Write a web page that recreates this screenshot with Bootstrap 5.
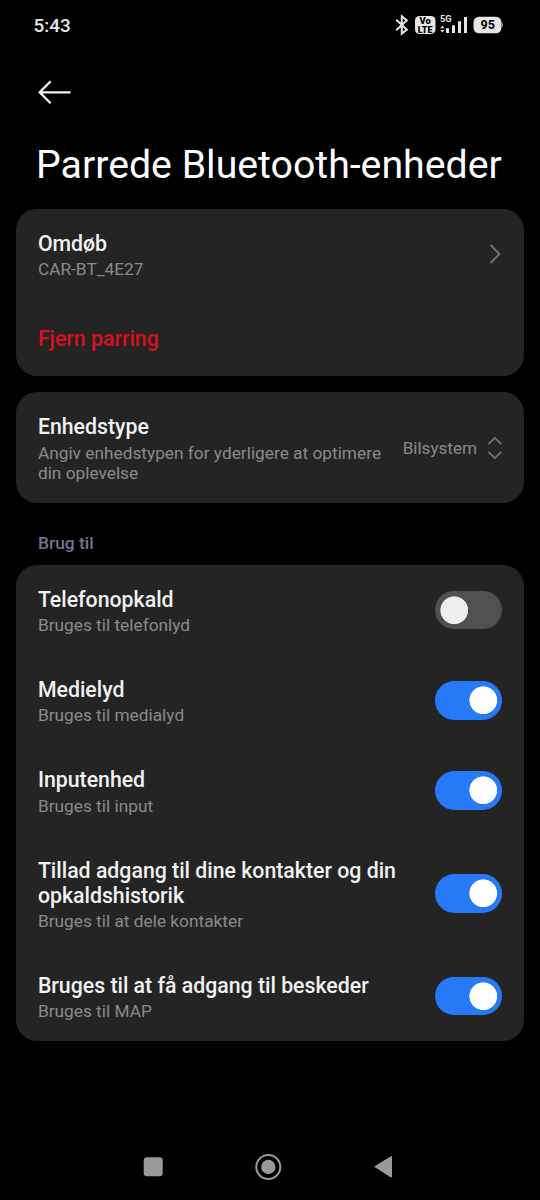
<!DOCTYPE html>
<html lang="da" data-bs-theme="dark">
<head>
<meta charset="utf-8">
<meta name="viewport" content="width=device-width, initial-scale=1">
<title>Parrede Bluetooth-enheder</title>
<link href="https://cdn.jsdelivr.net/npm/bootstrap@5.3.0/dist/css/bootstrap.min.css" rel="stylesheet">
<style>
body{background:#000;color:#f2f2f2;font-family:Roboto,"Liberation Sans",sans-serif;height:1200px;overflow:hidden}
svg{display:block;flex:none}
.statusbar{height:50px;padding:0 36px 0 33.5px;color:#e6e6e6}
.clock{font-size:18.9px;font-weight:500;line-height:50px;padding-top:1px}
.back{height:84px;padding:30px 0 0 38px}
.page-title{font-size:39.25px;font-weight:400;line-height:48px;margin:7px 0 20px 36px;white-space:nowrap}
.panel{background:#242424;border-radius:21px;margin:0 16.5px 16.5px 16.4px;padding:0 21.5px}
.setting{min-height:90.25px;padding:20.8px 0}
.setting>:first-child{margin:1.2px 0 -1.2px}
.setting-name{font-size:21.29px;font-weight:500;line-height:25.2px}
.setting-note{font-size:17.3px;line-height:20.4px;margin-top:3px;color:#8a8a8a}
.unpair{height:76.6px;line-height:79px;font-size:21.27px;font-weight:500;color:#d9101f}
.section-name{font-size:17.4px;font-weight:500;line-height:20px;color:#74748c;margin:30px 0 12px 38px}
.device-type{font-size:17.1px;color:#8a8a8a;margin:2.4px 10px 0 0}
.form-switch .form-check-input{width:67.5px;height:38.5px;border:0;border-radius:20px;background-color:#505050;background-size:38.5px 38.5px;background-image:radial-gradient(circle at center,#eee 13.5px,transparent 14.2px);background-position:left 0 center;margin:0;box-shadow:none;opacity:1}
.form-switch .form-check-input:checked{background-color:#277af7;background-image:radial-gradient(circle at center,#fff 13.5px,transparent 14.2px);background-position:right 0 center}
.navkeys{position:fixed;left:0;right:0;bottom:18px;height:30px}
</style>
</head>
<body class="d-flex flex-column">
<header>
<div class="statusbar d-flex justify-content-between align-items-center">
<span class="clock">5:43</span>
<svg width="111" height="26" viewBox="393 12 111 26" fill="#e6e6e6" font-family="Roboto,sans-serif">
<path d="M396.2 19.7 406.8 29.6 401.8 33.7V16.3L406.8 20.4 396.2 30.3" fill="none" stroke="#e6e6e6" stroke-width="2"/>
<rect x="415" y="16" width="20.5" height="18" rx="4.5"/>
<text x="425.2" y="24.4" text-anchor="middle" font-size="9.3" font-weight="900" fill="#000">Vo</text>
<text x="425.2" y="32.6" text-anchor="middle" font-size="9" font-weight="900" fill="#000">LTE</text>
<text x="440" y="21.8" font-size="9.3" font-weight="700">5G</text>
<path d="M440.3 28.2 442.4 25.7 444.5 28.2ZM440.3 30 442.4 32.6 444.5 30ZM446 28.3h3v4.7h-3ZM452 25.3h3V33h-3ZM458 21.3h3V33h-3ZM464 17h3v16h-3Z"/>
<rect x="473.5" y="16.7" width="28" height="16.6" rx="5.5"/>
<path d="M502 22q1.7 3 0 6Z"/>
<text x="487.7" y="29.4" text-anchor="middle" font-size="12.5" font-weight="700" fill="#000">95</text>
</svg>
</div>
<div class="back">
<svg width="34" height="26" viewBox="0 0 34 26" fill="none" stroke="#f2f2f2" stroke-width="2.3"><path d="M32.6 12.3H2M12.6 1.4 1.7 12.3 12.6 23.2"/></svg>
</div>
<h1 class="page-title">Parrede Bluetooth-enheder</h1>
</header>
<main>
<section class="panel">
<div class="setting d-flex align-items-center justify-content-between">
<div><div class="setting-name">Omdøb</div><div class="setting-note">CAR-BT_4E27</div></div>
<svg width="14" height="22" viewBox="0 0 14 22" fill="none" stroke="#747474" stroke-width="1.8"><path d="M2.5 2 11.5 11 2.5 20"/></svg>
</div>
<div class="unpair">Fjern parring</div>
</section>
<section class="panel mb-0">
<div class="setting d-flex align-items-center">
<div class="flex-grow-1"><div class="setting-name">Enhedstype</div><div class="setting-note">Angiv enhedstypen for yderligere at optimere<br>din oplevelse</div></div>
<span class="device-type">Bilsystem</span>
<svg width="15" height="24" viewBox="0 0 15 24" fill="none" stroke="#747474" stroke-width="1.8"><path d="M1.3 8.2 7.8 1.9 14.3 8.2M1.3 15.8 7.8 22.1 14.3 15.8"/></svg>
</div>
</section>
<h2 class="section-name">Brug til</h2>
<section class="panel">
<div class="setting d-flex align-items-center justify-content-between">
<div><div class="setting-name">Telefonopkald</div><div class="setting-note">Bruges til telefonlyd</div></div>
<div class="form-switch p-0 m-0 d-flex"><input class="form-check-input" type="checkbox" role="switch" aria-label="Telefonopkald"></div>
</div>
<div class="setting d-flex align-items-center justify-content-between">
<div><div class="setting-name">Medielyd</div><div class="setting-note">Bruges til medialyd</div></div>
<div class="form-switch p-0 m-0 d-flex"><input class="form-check-input" type="checkbox" role="switch" aria-label="Medielyd" checked></div>
</div>
<div class="setting d-flex align-items-center justify-content-between">
<div><div class="setting-name">Inputenhed</div><div class="setting-note">Bruges til input</div></div>
<div class="form-switch p-0 m-0 d-flex"><input class="form-check-input" type="checkbox" role="switch" aria-label="Inputenhed" checked></div>
</div>
<div class="setting d-flex align-items-center justify-content-between">
<div><div class="setting-name">Tillad adgang til dine kontakter og din<br>opkaldshistorik</div><div class="setting-note">Bruges til at dele kontakter</div></div>
<div class="form-switch p-0 m-0 d-flex"><input class="form-check-input" type="checkbox" role="switch" aria-label="Kontakter" checked></div>
</div>
<div class="setting d-flex align-items-center justify-content-between">
<div><div class="setting-name">Bruges til at få adgang til beskeder</div><div class="setting-note">Bruges til MAP</div></div>
<div class="form-switch p-0 m-0 d-flex"><input class="form-check-input" type="checkbox" role="switch" aria-label="Beskeder" checked></div>
</div>
</section>
</main>
<nav class="navkeys">
<svg width="540" height="30" viewBox="0 1152 540 30" fill="#999"><rect x="143.7" y="1157.2" width="19" height="19" rx="3"/><circle cx="268.3" cy="1167" r="7.2"/><circle cx="268.3" cy="1167" r="12" fill="none" stroke="#999" stroke-width="2"/><path d="M375.3 1166.7 391.3 1156.8V1176.8Z" stroke="#999" stroke-width="1.4" stroke-linejoin="round"/></svg>
</nav>
<script src="https://cdn.jsdelivr.net/npm/bootstrap@5.3.0/dist/js/bootstrap.bundle.min.js"></script>
</body>
</html>
